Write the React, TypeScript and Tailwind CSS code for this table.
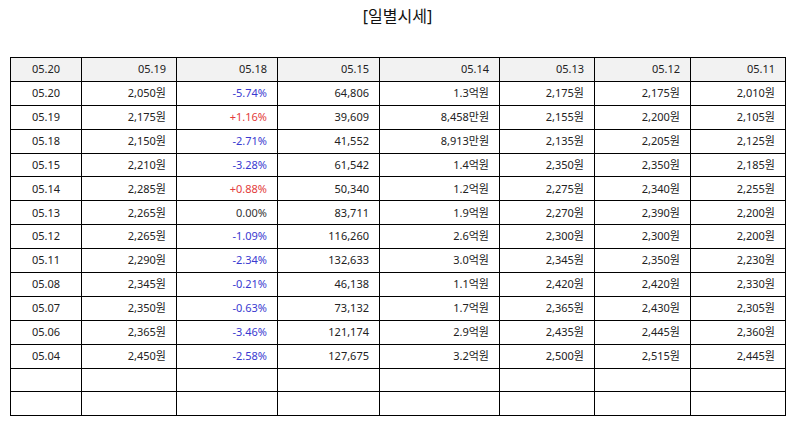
const headers = ["05.20", "05.19", "05.18", "05.15", "05.14", "05.13", "05.12", "05.11"];

const widths = ["w-[71px]", "w-[95px]", "w-[101px]", "w-[102px]", "w-[120px]", "w-[95px]", "w-[96px]", "w-[95px]"];

type Row = [string, string, string, string, string, string, string, string];

const rows: Row[] = [
  ["05.20", "2,050원", "-5.74%", "64,806", "1.3억원", "2,175원", "2,175원", "2,010원"],
  ["05.19", "2,175원", "+1.16%", "39,609", "8,458만원", "2,155원", "2,200원", "2,105원"],
  ["05.18", "2,150원", "-2.71%", "41,552", "8,913만원", "2,135원", "2,205원", "2,125원"],
  ["05.15", "2,210원", "-3.28%", "61,542", "1.4억원", "2,350원", "2,350원", "2,185원"],
  ["05.14", "2,285원", "+0.88%", "50,340", "1.2억원", "2,275원", "2,340원", "2,255원"],
  ["05.13", "2,265원", "0.00%", "83,711", "1.9억원", "2,270원", "2,390원", "2,200원"],
  ["05.12", "2,265원", "-1.09%", "116,260", "2.6억원", "2,300원", "2,300원", "2,200원"],
  ["05.11", "2,290원", "-2.34%", "132,633", "3.0억원", "2,345원", "2,350원", "2,230원"],
  ["05.08", "2,345원", "-0.21%", "46,138", "1.1억원", "2,420원", "2,420원", "2,330원"],
  ["05.07", "2,350원", "-0.63%", "73,132", "1.7억원", "2,365원", "2,430원", "2,305원"],
  ["05.06", "2,365원", "-3.46%", "121,174", "2.9억원", "2,435원", "2,445원", "2,360원"],
  ["05.04", "2,450원", "-2.58%", "127,675", "3.2억원", "2,500원", "2,515원", "2,445원"],
];

const rateColor = (v: string) => {
  if (v.startsWith("-")) return "text-[#3a3ad0]";
  if (v.startsWith("+")) return "text-[#e33b3b]";
  return "text-[#333]";
};

const App = () => {
  return (
    <div className="w-[795px] h-[425px] bg-white font-['Noto_Sans','Noto_Sans_CJK_KR',sans-serif] text-[#222]">
      <h1 className="pt-[5px] h-[57px] text-center text-[16px] leading-[22px] text-[#111]">[일별시세]</h1>
      <div className="px-[10px]">
        <table className="w-full border-collapse border-[1.5px] border-black table-fixed text-[11px]">
          <colgroup>
            {widths.map((w, i) => (
              <col key={i} className={w} />
            ))}
          </colgroup>
          <thead>
            <tr className="h-[23.9px] bg-[#f2f2f2]">
              {headers.map((h, i) => (
                <th
                  key={h}
                  className={`border-[1.5px] border-black font-normal px-[10px] ${i === 0 ? "text-center" : "text-right"}`}
                >
                  {h}
                </th>
              ))}
            </tr>
          </thead>
          <tbody>
            {rows.map((r) => (
              <tr key={r[0]} className="h-[23.9px]">
                {r.map((c, i) => (
                  <td
                    key={i}
                    className={`border-[1.5px] border-black px-[10px] ${i === 0 ? "text-center" : "text-right"} ${
                      i === 2 ? rateColor(c) : ""
                    }`}
                  >
                    {c}
                  </td>
                ))}
              </tr>
            ))}
            {[0, 1].map((k) => (
              <tr key={k} className="h-[23.9px]">
                {headers.map((h) => (
                  <td key={h} className="border-[1.5px] border-black"></td>
                ))}
              </tr>
            ))}
          </tbody>
        </table>
      </div>
    </div>
  );
};

export default App;
